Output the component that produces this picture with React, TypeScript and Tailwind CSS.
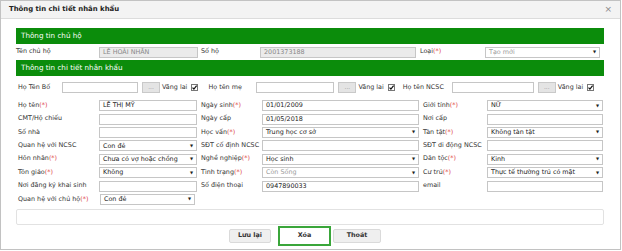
import React from 'react';

type Cell = {
  label: string;
  req?: boolean;
  value?: string;
  select?: boolean;
  disabled?: boolean;
};

type Row = [Cell, Cell?, Cell?];

const rows: Row[] = [
  [
    { label: 'Họ tên', req: true, value: 'LÊ THỊ MỸ' },
    { label: 'Ngày sinh', req: true, value: '01/01/2009' },
    { label: 'Giới tính', req: true, value: 'NỮ', select: true },
  ],
  [
    { label: 'CMT/Hộ chiếu' },
    { label: 'Ngày cấp', value: '01/05/2018' },
    { label: 'Nơi cấp' },
  ],
  [
    { label: 'Số nhà' },
    { label: 'Học vấn', req: true, value: 'Trung học cơ sở', select: true },
    { label: 'Tàn tật', req: true, value: 'Không tàn tật', select: true },
  ],
  [
    { label: 'Quan hệ với NCSC', value: 'Con đẻ', select: true },
    { label: 'SĐT cố định NCSC' },
    { label: 'SĐT di động NCSC' },
  ],
  [
    { label: 'Hôn nhân', req: true, value: 'Chưa có vợ hoặc chồng', select: true },
    { label: 'Nghề nghiệp', req: true, value: 'Học sinh', select: true },
    { label: 'Dân tộc', req: true, value: 'Kinh', select: true },
  ],
  [
    { label: 'Tôn giáo', req: true, value: 'Không', select: true },
    { label: 'Tình trạng', req: true, value: 'Còn Sống', select: true, disabled: true },
    { label: 'Cư trú', req: true, value: 'Thực tế thường trú có mặt', select: true },
  ],
  [
    { label: 'Nơi đăng ký khai sinh' },
    { label: 'Số điện thoại', value: '0947890033' },
    { label: 'email' },
  ],
  [{ label: 'Quan hệ với chủ hộ', req: true, value: 'Con đẻ', select: true }],
];

const Label = ({ text, req, className }: { text: string; req?: boolean; className: string }) => (
  <div className={`shrink-0 whitespace-nowrap text-[#333] ${className}`}>
    {text}
    {req && <span className="text-[#e04848]">(*)</span>}
  </div>
);

const Box = ({
  value,
  select,
  disabled,
  gray,
  className,
}: {
  value?: string;
  select?: boolean;
  disabled?: boolean;
  gray?: boolean;
  className: string;
}) => (
  <div
    className={`shrink-0 h-[11px] flex items-center justify-between border border-[#c6c6c6] px-[3px] ${
      gray ? 'bg-[#ebebeb] text-[#888]' : 'bg-white'
    } ${disabled ? 'text-[#9a9a9a]' : 'text-[#222]'} ${className}`}
  >
    <span className="whitespace-nowrap leading-none">{value}</span>
    {select && <span className="text-[4px] leading-none text-[#222]">▼</span>}
  </div>
);

const Check = () => (
  <svg width="7" height="7" viewBox="0 0 7 7" className="shrink-0">
    <rect x="0.5" y="0.5" width="6" height="6" fill="#fff" stroke="#777" />
    <path d="M1.5 3.6 L2.9 5 L5.6 1.6" fill="none" stroke="#111" strokeWidth="1.2" />
  </svg>
);

const Parent = ({ label, lw, iw }: { label: string; lw: string; iw: string }) => (
  <div className="flex items-center">
    <Label text={label} className={lw} />
    <div className={`h-[11px] border border-[#c6c6c6] bg-white ${iw}`} />
    <div className="ml-[4px] w-[18px] h-[11px] border border-[#c9c9c9] bg-[#e4e4e4] text-[#999] text-[6px] leading-[8px] text-center">
      ...
    </div>
    <span className="ml-[2px] text-[#333]">Vãng lai</span>
    <span className="ml-[4px]">
      <Check />
    </span>
  </div>
);

const GreenBar = ({ text }: { text: string }) => (
  <div className="h-[16px] bg-[#0b8c0b] text-white text-[7.2px] flex items-center pl-[5px]">{text}</div>
);

export default function App() {
  return (
    <div
      className="w-[622px] h-[251px] bg-white text-[6.4px] overflow-hidden"
      style={{ fontFamily: '"DejaVu Sans", Verdana, sans-serif' }}
    >
      <div className="w-[621px] h-[250px] border-[1.5px] border-[#c2c2c2] flex flex-col">
        <div className="h-[18px] shrink-0 bg-[#f3f3f3] border-b border-[#dcdcdc] flex items-center justify-between pl-[8px] pr-[8px]">
          <span className="font-bold text-[6.9px] text-[#222]">Thông tin chi tiết nhân khẩu</span>
          <span className="text-[9px] text-[#888] leading-none">×</span>
        </div>

        <div className="pl-[15px] pr-[16px] pt-[9px] flex flex-col">
          <GreenBar text="Thông tin chủ hộ" />
          <div className="h-[16px] flex items-center">
            <Label text="Tên chủ hộ" className="w-[83px]" />
            <Box value="LÊ HOÀI NHÂN" gray className="w-[99px]" />
            <Label text="Số hộ" className="w-[62px] pl-[3px]" />
            <Box value="2001373188" gray className="w-[156px]" />
            <Label text="Loại" req className="w-[69px] pl-[4px]" />
            <Box value="Tạo mới" select disabled className="w-[115px]" />
          </div>
          <GreenBar text="Thông tin chi tiết nhân khẩu" />

          <div className="h-[23px] flex items-center pl-[2px]">
            <Parent label="Họ Tên Bố" lw="w-[44px]" iw="w-[76px]" />
            <div className="ml-[10px]">
              <Parent label="Họ tên mẹ" lw="w-[48px]" iw="w-[78px]" />
            </div>
            <div className="ml-[8px]">
              <Parent label="Họ tên NCSC" lw="w-[49px]" iw="w-[82px]" />
            </div>
          </div>

          <div className="flex flex-col">
            {rows.map((r, i) => (
              <div key={i} className="h-[13.4px] flex items-center">
                <Label text={r[0].label} req={r[0].req} className="w-[83px] pl-[2px]" />
                <Box
                  value={r[0].value}
                  select={r[0].select}
                  className={i === 7 ? 'w-[95px] ml-[1px]' : 'w-[98px]'}
                />
                {r[1] && (
                  <>
                    <Label text={r[1].label} req={r[1].req} className="w-[65px] pl-[4px]" />
                    <Box
                      value={r[1].value}
                      select={r[1].select}
                      disabled={r[1].disabled}
                      className="w-[157px]"
                    />
                  </>
                )}
                {r[2] && (
                  <>
                    <Label text={r[2].label} req={r[2].req} className="w-[68px] pl-[4px]" />
                    <Box value={r[2].value} select={r[2].select} className="w-[116px]" />
                  </>
                )}
              </div>
            ))}
          </div>

          <div className="mt-[3px] h-[16px] border border-[#e2e2e2] rounded-[2px]" />

          <div className="mt-[1px] flex items-center justify-center gap-[2px] pr-[10px]">
            <button className="w-[42px] h-[14px] bg-[#efefef] border border-[#dadada] rounded-[2px] font-bold text-[#333]">
              Lưu lại
            </button>
            <button className="ml-[5px] w-[53px] h-[20px] bg-white border-2 border-[#3aa63a] font-bold text-[#333]">
              Xóa
            </button>
            <button className="w-[48px] h-[14px] bg-[#efefef] border border-[#dadada] rounded-[2px] font-bold text-[#333]">
              Thoát
            </button>
          </div>
        </div>
      </div>
    </div>
  );
}
